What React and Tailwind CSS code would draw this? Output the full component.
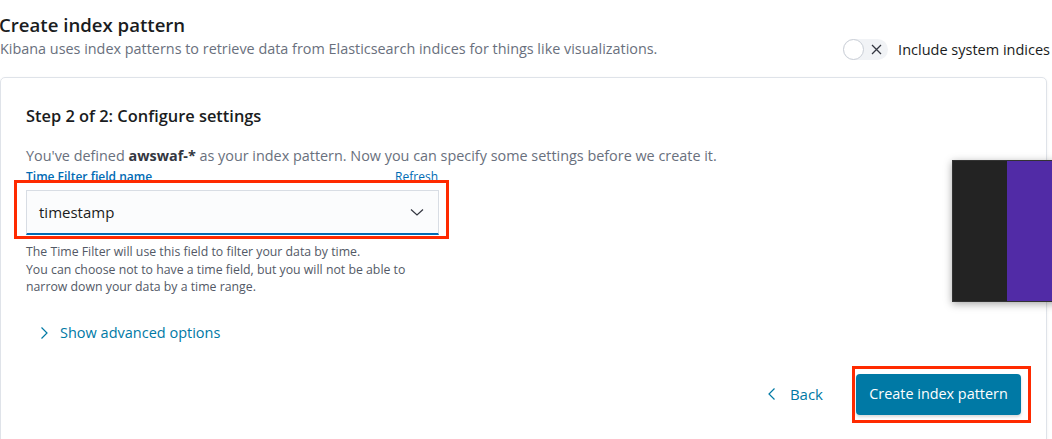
import React from "react";

function ChevronDown() {
  return (
    <svg width="16" height="16" viewBox="0 0 16 16" fill="none" stroke="#343741" strokeWidth="1.2">
      <path d="M2 5.5 L8 11 L14 5.5" />
    </svg>
  );
}
function ChevronRight({ color = "#006BB4" }) {
  return (
    <svg width="12" height="16" viewBox="0 0 12 16" fill="none" stroke={color} strokeWidth="1.2">
      <path d="M3.5 2.5 L9 8 L3.5 13.5" />
    </svg>
  );
}
function ChevronLeft({ color = "#006BB4" }) {
  return (
    <svg width="12" height="16" viewBox="0 0 12 16" fill="none" stroke={color} strokeWidth="1.2">
      <path d="M8.5 2.5 L3 8 L8.5 13.5" />
    </svg>
  );
}

export default function App() {
  return (
    <div className="relative w-[1052px] h-[439px] overflow-hidden bg-white font-['Open_Sans',sans-serif] text-[#343741]">
      {/* header */}
      <div className="flex justify-between items-start pr-[2px]">
        <div className="pt-[13px]">
          <h1 className="text-[18.6px] leading-[24px] font-semibold text-[#1a1c21] -ml-[1px]">Create index pattern</h1>
          <p className="mt-[2px] text-[14.4px] leading-[20px] text-[#69707D]">
            Kibana uses index patterns to retrieve data from Elasticsearch indices for things like visualizations.
          </p>
        </div>
        <div className="flex items-center pt-[39px]">
          <div className="relative w-[45px] h-[21px] rounded-full bg-[#f1f3f6]">
            <div className="absolute left-0 top-0 w-[21px] h-[21px] rounded-full bg-white border border-[#c9ced6]" />
            <svg className="absolute left-[27px] top-[4px]" width="13" height="13" viewBox="0 0 13 13" stroke="#343741" strokeWidth="1.3">
              <path d="M2 2 L11 11 M11 2 L2 11" />
            </svg>
          </div>
          <span className="ml-[10px] text-[14.5px] leading-[20px] text-[#1a1c21]">Include system indices</span>
        </div>
      </div>

      {/* panel */}
      <div className="mt-[17px] mr-[5px] h-[400px] rounded-[5px] border border-[#dfe3e9] shadow-[0_1px_3px_rgba(0,0,0,0.06)] pt-[26px] pl-[25px] pr-[24px]">
        <h2 className="text-[16.4px] leading-[24px] font-semibold text-[#1a1c21]">Step 2 of 2: Configure settings</h2>
        <p className="mt-[18px] text-[14.4px] leading-[20px] text-[#69707D]">
          You've defined <span className="font-bold text-[#343741]">awswaf-*</span> as your index pattern. Now you can specify some settings before we create it.
        </p>
        <div className="w-[413px]">
          <div className="flex justify-between items-center h-[22px] text-[12px] leading-[16px]">
            <span className="font-semibold text-[#006BB4]">Time Filter field name</span>
            <span className="text-[#006BB4] mr-[1px]">Refresh</span>
          </div>
          <div className="mt-[2px] h-[45px] flex items-center justify-between bg-[#fbfcfd] border border-[#d8dde4] border-b-2 border-b-[#006BB4] pl-[12px] pr-[13px]">
            <span className="text-[15px] text-[#1a1c21]">timestamp</span>
            <ChevronDown />
          </div>
          <div className="mt-[8px] text-[12.3px] leading-[17.5px] text-[#535966]">
            <div>The Time Filter will use this field to filter your data by time.</div>
            <div>You can choose not to have a time field, but you will not be able to</div>
            <div>narrow down your data by a time range.</div>
          </div>
        </div>
        <div className="mt-[26px] ml-[12px] flex items-center gap-[10px] text-[14.5px] leading-[22px] text-[#0079A5]">
          <ChevronRight color="#0079A5" />
          <span>Show advanced options</span>
        </div>
        <div className="mt-[30px] flex justify-end items-center pr-[0px]">
          <div className="flex items-center gap-[12px] text-[15px] text-[#0079A5]">
            <ChevronLeft color="#0079A5" />
            <span>Back</span>
          </div>
          <div className="ml-[33px] mr-[1px] w-[165px] h-[41px] rounded-[4px] bg-[#0079A5] text-white text-[14.4px] flex items-center justify-center shadow-[0_2px_3px_rgba(0,0,0,0.15)]">
            Create index pattern
          </div>
        </div>
      </div>

      {/* red annotation boxes */}
      <div className="absolute left-[14px] top-[180px] w-[435px] h-[59px] border-[3px] border-[#ff2a00] pointer-events-none" />
      <div className="absolute left-[852px] top-[366px] w-[179px] h-[57px] border-[3px] border-[#ff2a00] pointer-events-none" />

      {/* overlay window */}
      <div className="absolute left-[952px] top-[160px] w-[110px] h-[142px] flex border border-[#333] shadow-[0_2px_8px_rgba(0,0,0,0.35)]">
        <div className="w-[54px] bg-[#232323]" />
        <div className="flex-1 bg-[#512ba6]" />
      </div>
    </div>
  );
}
